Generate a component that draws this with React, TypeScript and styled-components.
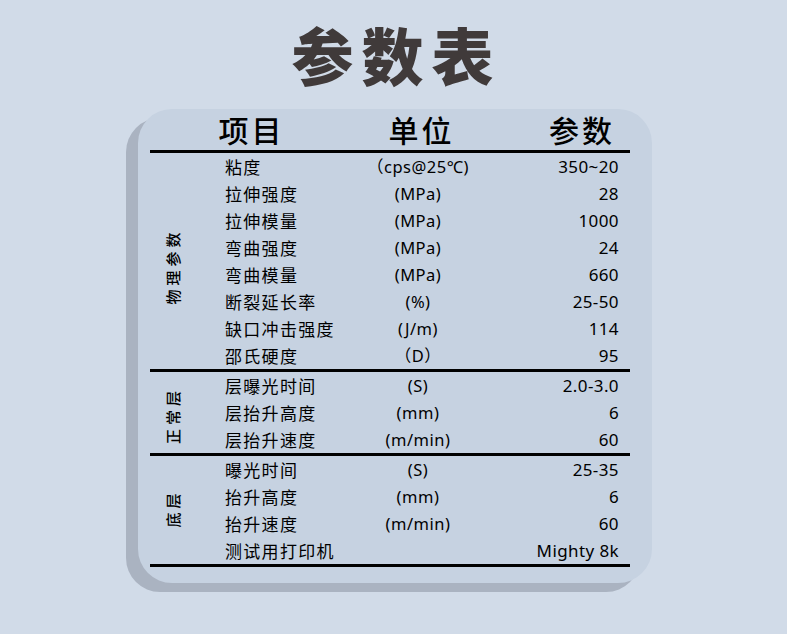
import React from "react";
import styled, { createGlobalStyle } from "styled-components";

const Global = createGlobalStyle`
  html, body { margin: 0; padding: 0; background: #d1dbe8; }
  body { font-family: "Noto Sans", "Noto Sans CJK SC", sans-serif; color: #000; }
`;

const Page = styled.div`
  width: 787px;
  height: 634px;
  overflow: hidden;
  background: #d1dbe8;
  display: flex;
  flex-direction: column;
  align-items: center;
`;

const Title = styled.h1`
  margin: 0;
  height: 109px;
  display: flex;
  align-items: center;
  padding: 0 0 2px 6px;
  box-sizing: border-box;
  font-family: "Noto Sans CJK SC", sans-serif;
  font-weight: 900;
  font-size: 62px;
  letter-spacing: 8px;
  color: #403a3a;
`;

const Card = styled.div`
  width: 514px;
  box-sizing: border-box;
  margin-left: 3px;
  padding: 0 22px 16px 12px;
  background: #c6d2e1;
  border-radius: 34px;
  box-shadow: -12px 9px 0 0 #aab3c1;
`;

const Header = styled.div`
  height: 41px;
  display: grid;
  grid-template-columns: 200px 140px 1fr;
  align-items: center;
  font-family: "Noto Sans CJK SC", sans-serif;
  font-weight: 500;
  font-size: 30px;
  letter-spacing: 3px;
`;

const HeadCell = styled.div<{ $align: "center" | "right" }>`
  text-align: ${(p) => p.$align};
  padding-right: ${(p) => (p.$align === "right" ? "15px" : "0")};
  padding-left: ${(p) => (p.$align === "center" ? "3px" : "0")};
  line-height: 41px;
`;

const Rule = styled.div`
  height: 3px;
  background: #000;
`;

const Section = styled.div`
  display: grid;
  grid-template-columns: 44px 1fr;
`;

const SideLabel = styled.div<{ $shift: number }>`
  display: flex;
  align-items: center;
  justify-content: center;
  padding-top: ${(p) => p.$shift}px;
  box-sizing: border-box;
`;

const SideText = styled.span`
  display: block;
  white-space: nowrap;
  transform: rotate(-90deg);
  font-family: "Noto Sans CJK SC", sans-serif;
  font-weight: 500;
  font-size: 15px;
  letter-spacing: 4px;
  padding-left: 4px;
`;

const Rows = styled.div`
  display: flex;
  flex-direction: column;
`;

const Row = styled.div`
  height: 27px;
  display: grid;
  grid-template-columns: 135px 116px 1fr;
  align-items: center;
  padding-left: 31px;
  padding-right: 11px;
`;

const Item = styled.div`
  font-family: "Noto Sans CJK SC", sans-serif;
  font-size: 17px;
  letter-spacing: 1.3px;
  white-space: nowrap;
  line-height: 27px;
`;

const Unit = styled.div`
  font-family: "Noto Sans", "Noto Sans CJK SC", sans-serif;
  font-size: 16.5px;
  text-align: center;
  white-space: nowrap;
  line-height: 27px;
  letter-spacing: 0.5px;
`;

const Value = styled.div`
  font-family: "Noto Sans", "Noto Sans CJK SC", sans-serif;
  font-size: 17px;
  text-align: right;
  white-space: nowrap;
  line-height: 27px;
  letter-spacing: 0.4px;
`;

type R = [string, string, string];

const sections: { label: string; shift: number; rows: R[] }[] = [
  {
    label: "物理参数",
    shift: 14,
    rows: [
      ["粘度", "（cps@25℃)", "350~20"],
      ["拉伸强度", "(MPa)", "28"],
      ["拉伸模量", "(MPa)", "1000"],
      ["弯曲强度", "(MPa)", "24"],
      ["弯曲模量", "(MPa)", "660"],
      ["断裂延长率", "(%)", "25-50"],
      ["缺口冲击强度", "(J/m)", "114"],
      ["邵氏硬度", "（D）", "95"],
    ],
  },
  {
    label: "正常层",
    shift: 10,
    rows: [
      ["层曝光时间", "(S)", "2.0-3.0"],
      ["层抬升高度", "(mm)", "6"],
      ["层抬升速度", "(m/min)", "60"],
    ],
  },
  {
    label: "底层",
    shift: 0,
    rows: [
      ["曝光时间", "(S)", "25-35"],
      ["抬升高度", "(mm)", "6"],
      ["抬升速度", "(m/min)", "60"],
      ["测试用打印机", "", "Mighty 8k"],
    ],
  },
];

export default function App() {
  return (
    <>
      <Global />
      <Page>
        <Title>参数表</Title>
        <Card>
          <Header>
            <HeadCell $align="center">项目</HeadCell>
            <HeadCell $align="center">单位</HeadCell>
            <HeadCell $align="right">参数</HeadCell>
          </Header>
          <Rule />
          {sections.map((s) => (
            <React.Fragment key={s.label}>
              <Section>
                <SideLabel $shift={s.shift}>
                  <SideText>{s.label}</SideText>
                </SideLabel>
                <Rows>
                  {s.rows.map((r) => (
                    <Row key={r[0]}>
                      <Item>{r[0]}</Item>
                      <Unit>{r[1]}</Unit>
                      <Value>{r[2]}</Value>
                    </Row>
                  ))}
                </Rows>
              </Section>
              <Rule />
            </React.Fragment>
          ))}
        </Card>
      </Page>
    </>
  );
}
